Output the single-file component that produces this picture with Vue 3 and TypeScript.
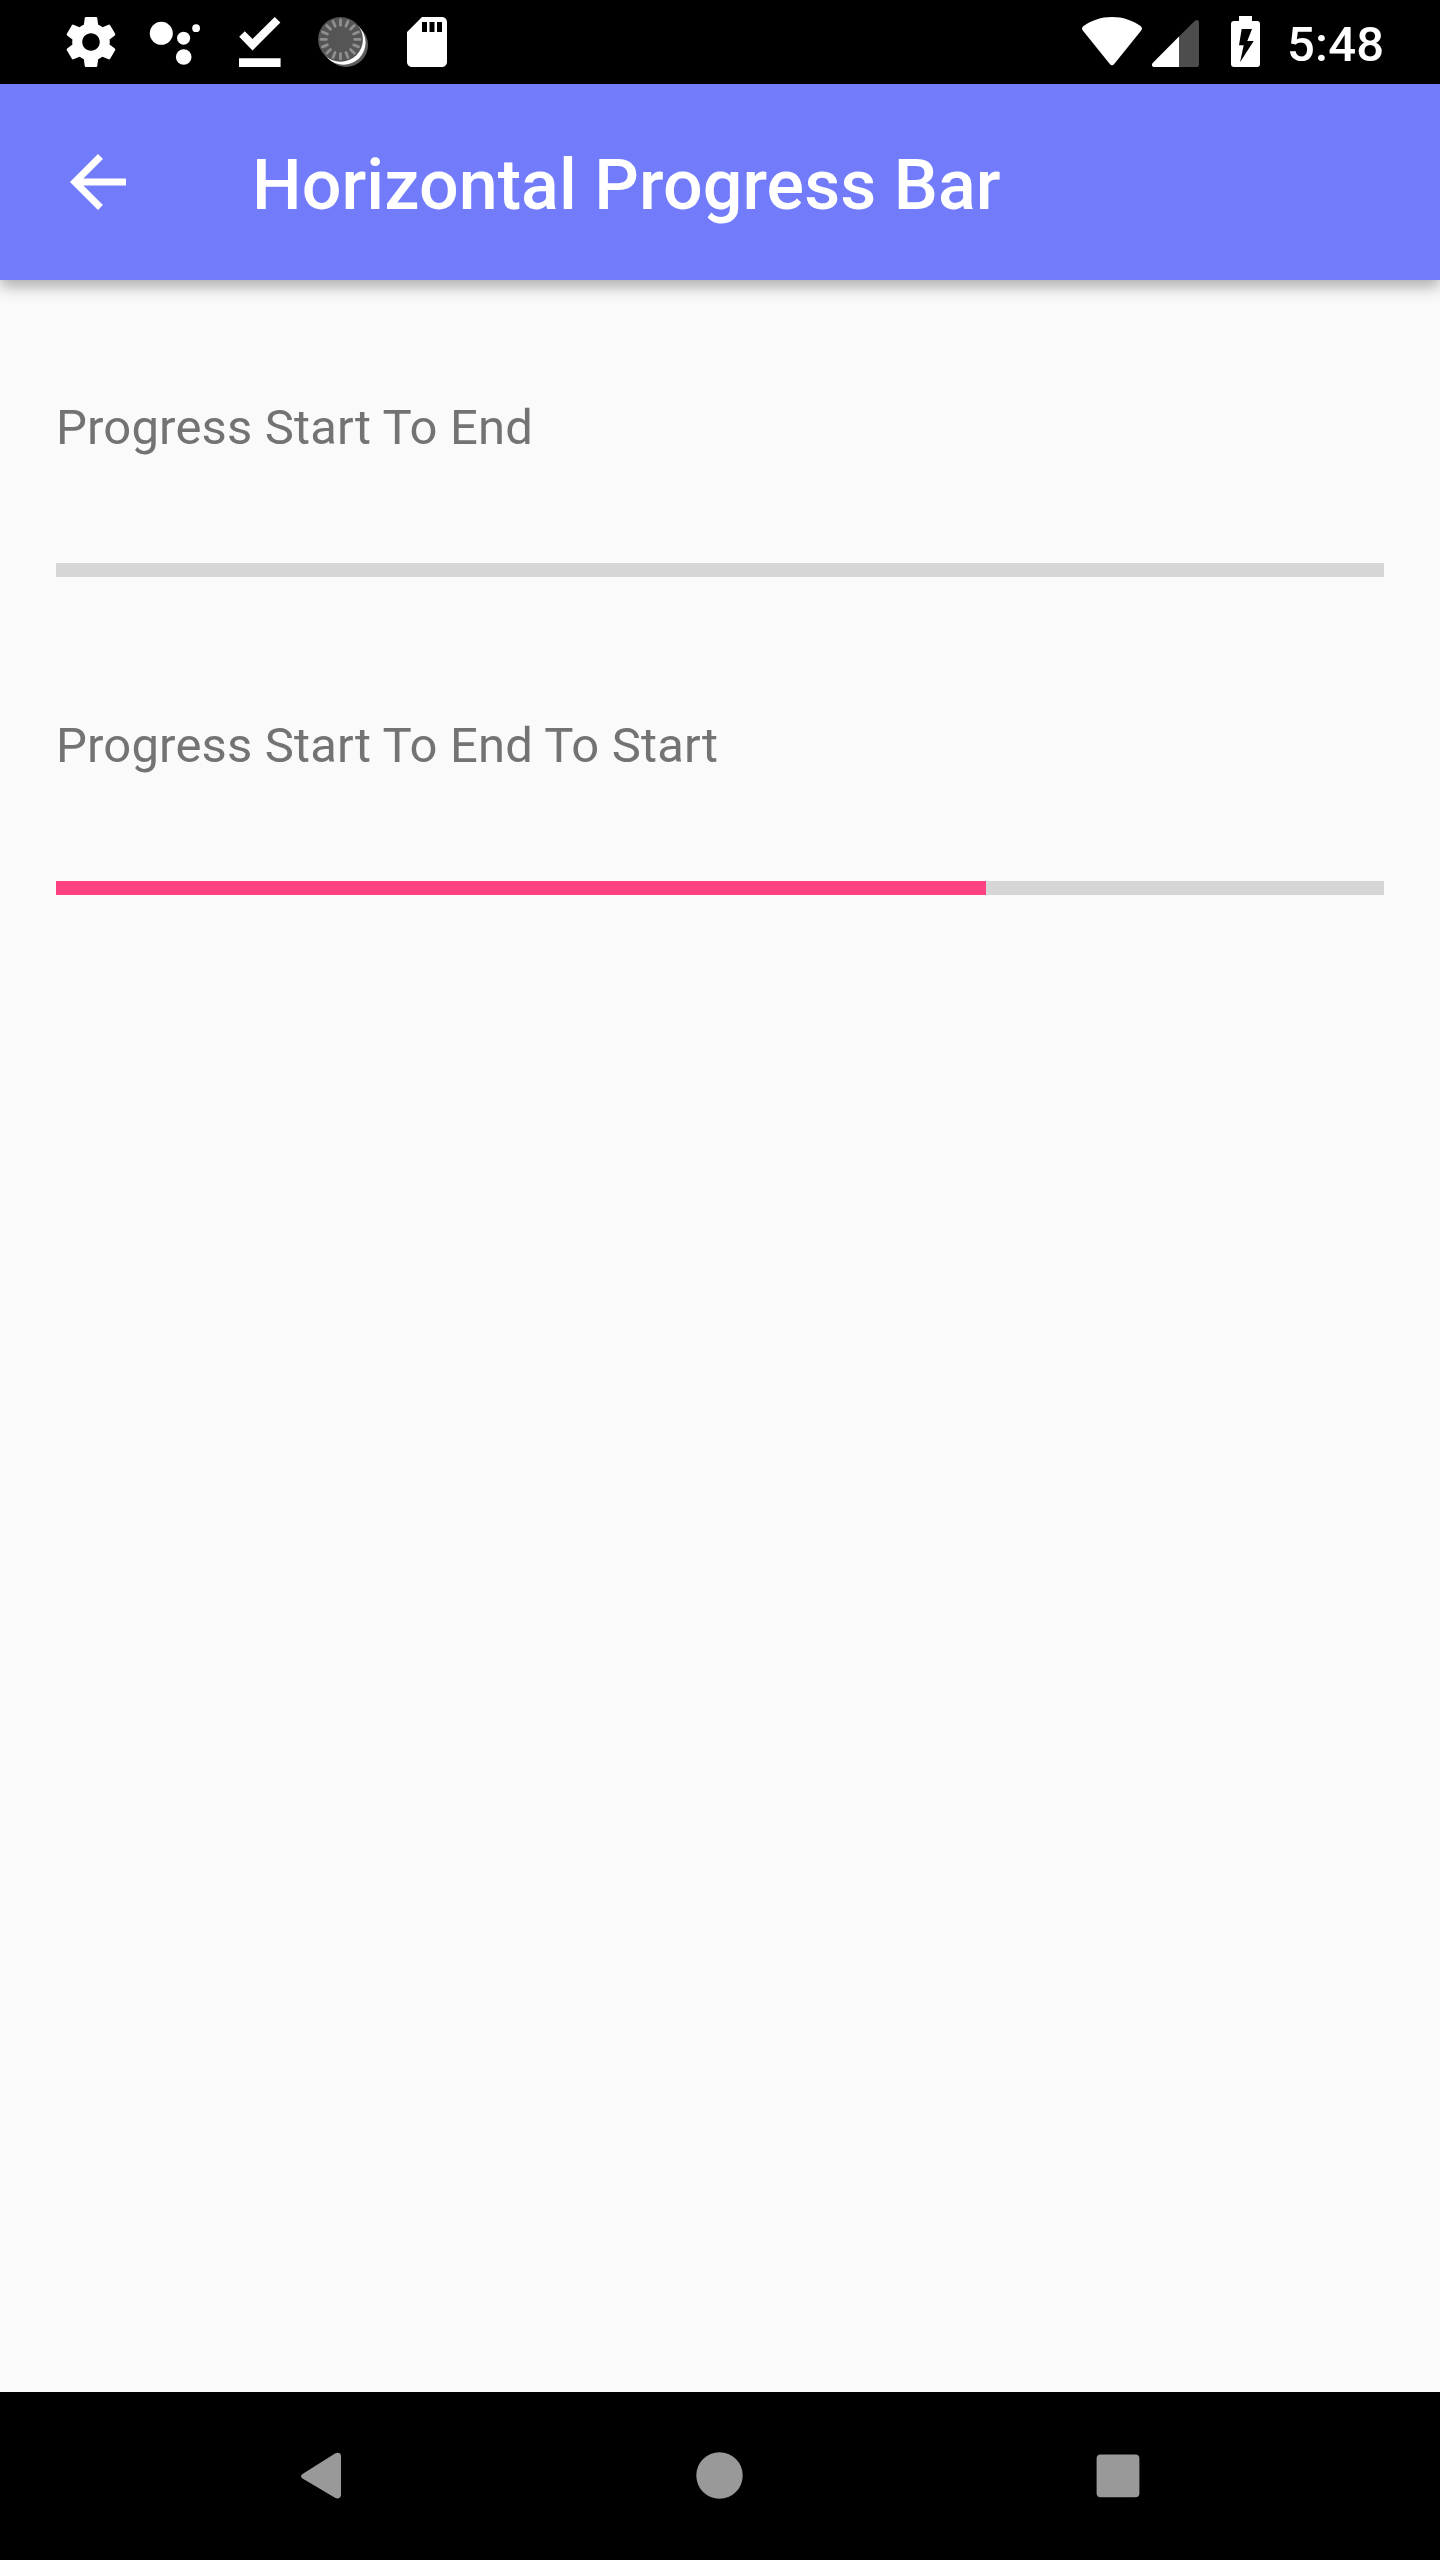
<script setup lang="ts">
interface ProgressItem {
  label: string
  value: number
}

const items: ProgressItem[] = [
  { label: 'Progress Start To End', value: 0 },
  { label: 'Progress Start To End To Start', value: 70.03 },
]

const ticks: number[] = Array.from({ length: 16 }, (_, i) => i * 22.5)
</script>

<template>
  <div class="screen">
    <header class="status">
      <div class="notifications">
        <svg width="60" height="60" viewBox="0 0 24 24" fill="#fff">
          <path d="M19.43 12.98c.04-.32.07-.64.07-.98s-.03-.66-.07-.98l2.11-1.65c.19-.15.24-.42.12-.64l-2-3.46c-.12-.22-.39-.3-.61-.22l-2.49 1c-.52-.4-1.08-.73-1.69-.98l-.38-2.65C14.46 2.18 14.25 2 14 2h-4c-.25 0-.46.18-.49.42l-.38 2.65c-.61.25-1.17.59-1.69.98l-2.49-1c-.23-.09-.49 0-.61.22l-2 3.46c-.13.22-.07.49.12.64l2.11 1.65c-.04.32-.07.65-.07.98s.03.66.07.98l-2.11 1.65c-.19.15-.24.42-.12.64l2 3.46c.12.22.39.3.61.22l2.49-1c.52.4 1.08.73 1.69.98l.38 2.65c.03.24.24.42.49.42h4c.25 0 .46-.18.49-.42l.38-2.65c.61-.25 1.17-.59 1.69-.98l2.49 1c.23.09.49 0 .61-.22l2-3.46c.12-.22.07-.49-.12-.64l-2.11-1.65zM12 15.5c-1.93 0-3.5-1.57-3.5-3.5s1.57-3.5 3.5-3.5 3.5 1.57 3.5 3.5-1.57 3.5-3.5 3.5z" />
        </svg>
        <svg width="60" height="60" viewBox="0 0 60 60" fill="#fff">
          <circle cx="16.3" cy="21.3" r="11.5" />
          <circle cx="38.6" cy="26.2" r="6.5" />
          <circle cx="51.1" cy="16.2" r="3.9" />
          <circle cx="38.7" cy="45" r="7.8" />
        </svg>
        <svg width="60" height="60" viewBox="0 0 60 60" fill="#fff">
          <path d="M10.2 24.8L15.8 19.2L23.5 27L45.7 5L51.4 10.5L23.5 38.4Z" />
          <path d="M10 46.2H51.6V55H10Z" />
        </svg>
        <svg width="60" height="60" viewBox="0 0 60 60">
          <circle cx="33" cy="33" r="22" fill="#5c5c5c" />
          <circle cx="30.400" cy="30.500" r="22.2" fill="#fff" />
          <circle cx="27.5" cy="27.4" r="22.4" fill="#555" />
          <path
            v-for="angle in ticks"
            :key="angle"
            d="M27.5 7.9V13.2"
            :transform="`rotate(${angle} 27.5 27.4)`"
            stroke="#8f8f8f"
            stroke-width="2.8"
            stroke-linecap="round"
          />
        </svg>
        <svg width="60" height="60" viewBox="0 0 24 24" fill="#fff">
          <path d="M18 2h-8L4 8v12c0 1.1.9 2 2 2h12c1.1 0 2-.9 2-2V4c0-1.1-.9-2-2-2zm-6 6h-2V4h2v4zm3 0h-2V4h2v4zm3 0h-2V4h2v4z" />
        </svg>
      </div>
      <div class="system">
        <svg class="wifi" width="60" height="50" viewBox="0 0 60 50">
          <path d="M30 0C19 0 9.500 3.400 1.500 9C-.1 10.200-.4 12 .8 13.500L28 47.300C29.200 48.700 30.800 48.700 32 47.300L59.200 13.500C60.400 12 60.100 10.200 58.500 9C50.500 3.400 41 0 30 0Z" fill="#fff" />
        </svg>
        <svg class="signal" width="47" height="47" viewBox="0 0 47 47">
          <path d="M27 16.500L43 .7C44.700-.7 47 .3 47 2.500V44.500Q47 47 44.500 47H27Z" fill="#4d4d4d" />
          <path d="M27 16.500V47H2C-.1 47-.7 44.700.7 43Z" fill="#fff" />
        </svg>
        <svg class="battery" width="29" height="51" viewBox="0 0 29 51">
          <path fill-rule="evenodd" d="M8 0H21V5H26Q29 5 29 8V48Q29 51 26 51H3Q0 51 0 48V8Q0 5 3 5H8ZM10.700 13L8 29.300H12.700L9 46.300L22.700 25H16.300L21 13Z" fill="#fff" />
        </svg>
        <span class="clock">5:48</span>
      </div>
    </header>

    <div class="appbar">
      <svg class="back" width="84" height="84" viewBox="0 0 24 24" fill="#fff">
        <path d="M20 11H7.830l5.590-5.590L12 4l-8 8 8 8 1.410-1.410L7.830 13H20v-2z" />
      </svg>
      <h1 class="title">Horizontal Progress Bar</h1>
    </div>

    <main class="content">
      <section v-for="item in items" :key="item.label" class="item">
        <p class="label">{{ item.label }}</p>
        <div class="track">
          <div class="fill" :style="{ width: item.value + '%' }"></div>
        </div>
      </section>
    </main>

    <nav class="navbar">
      <svg width="48" height="48" viewBox="0 0 48 48" fill="#999">
        <path d="M5.500 22L38 1.600C40.500 0 44 1 44 4V43C44 46 40.500 47.300 38 45.700L5.500 26.500C3.500 25.200 3.500 23.300 5.500 22Z" />
      </svg>
      <svg width="48" height="48" viewBox="0 0 48 48" fill="#999">
        <circle cx="23.500" cy="23.500" r="23.200" />
      </svg>
      <svg width="48" height="48" viewBox="0 0 48 48" fill="#999">
        <rect x="1.600" y="2.500" width="42.800" height="42.800" rx="4" />
      </svg>
    </nav>
  </div>
</template>

<style>
body {
  margin: 0;
}
</style>

<style scoped>
.screen {
  display: flex;
  flex-direction: column;
  width: 1440px;
  height: 2560px;
  overflow: hidden;
  background: #fafafa;
  font-family: Roboto, "Liberation Sans", sans-serif;
}

svg {
  display: block;
  flex: none;
}

.status {
  display: flex;
  justify-content: space-between;
  flex: none;
  box-sizing: border-box;
  height: 84px;
  padding: 0 56px 0 61px;
  background: #000;
}

.notifications {
  display: flex;
  align-items: center;
  gap: 24px;
}

.system {
  display: flex;
  align-items: flex-start;
}

.wifi {
  margin: 17px 10px 0 0;
}

.signal {
  margin: 20px 32px 0 0;
}

.battery {
  margin: 16px 27px 0 0;
}

.clock {
  width: 97px;
  padding-top: 4px;
  color: #fff;
  font-size: 49px;
  font-weight: 500;
  letter-spacing: 0.2px;
  line-height: 81px;
  white-space: nowrap;
}

.appbar {
  position: relative;
  display: flex;
  align-items: center;
  flex: none;
  box-sizing: border-box;
  height: 196px;
  padding-left: 56px;
  background: #727cfb;
  box-shadow: 0 7px 14px rgba(0, 0, 0, 0.3);
}

.title {
  margin: 0 0 0 112px;
  padding-top: 6px;
  color: #fff;
  font-size: 70px;
  font-weight: 500;
  letter-spacing: 0.06px;
  line-height: 84px;
  white-space: nowrap;
}

.content {
  flex: 1;
  padding: 119px 56px 0;
}

.item {
  height: 318px;
}

.label {
  margin: 0;
  color: #737373;
  font-size: 49px;
  letter-spacing: 0.155px;
  line-height: 57px;
}

.track {
  height: 14px;
  margin-top: 107px;
  background: #d6d6d6;
}

.fill {
  height: 100%;
  background: #ff4081;
}

.navbar {
  display: flex;
  align-items: center;
  justify-content: center;
  gap: 351px;
  flex: none;
  height: 168px;
  background: #000;
}
</style>
